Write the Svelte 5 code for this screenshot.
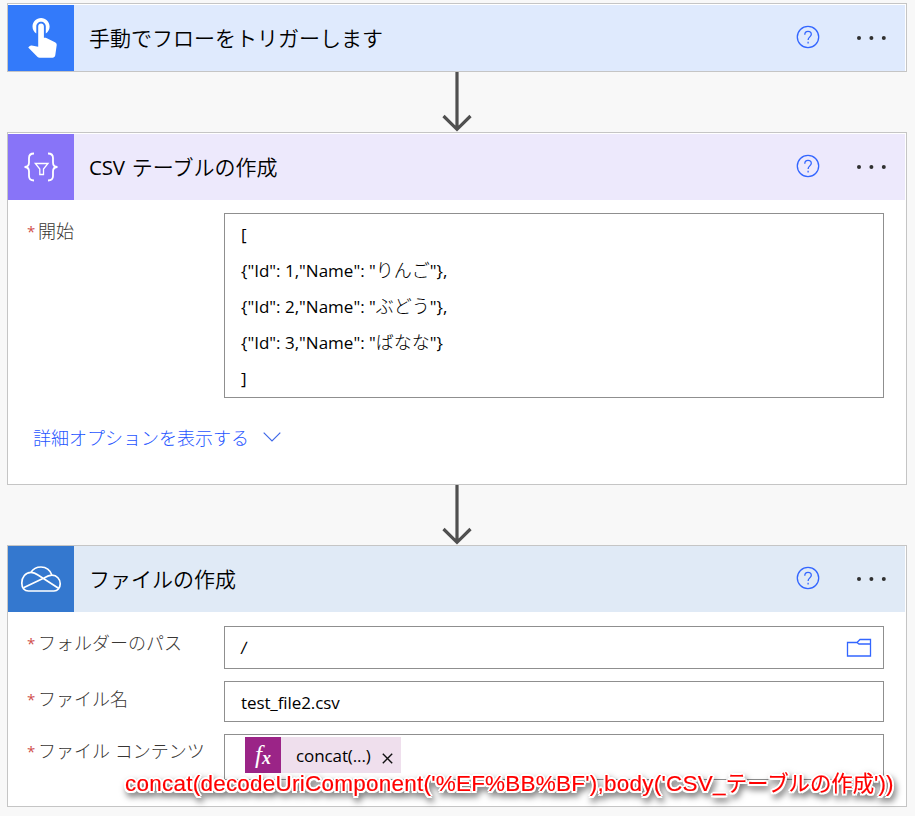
<script>
  const rows = [
    ['[', '', ''],
    ['{"Id": 1,"Name": "', 'りんご', '"},'],
    ['{"Id": 2,"Name": "', 'ぶどう', '"},'],
    ['{"Id": 3,"Name": "', 'ばなな', '"}'],
    [']', '', '']
  ];
</script>

{#snippet actions()}
  <svg class="help" viewBox="0 0 24 24"><circle cx="12" cy="12" r="10.7" /><path d="M8.8 9.7C8.8 7.5 10 6.3 12 6.3S15.3 7.5 15.3 9.3C15.3 11.8 12.1 12 12.1 15M12.1 16.8V18.4" /></svg>
  <svg class="dots" viewBox="0 0 32 6"><circle cx="3" cy="3" r="2" /><circle cx="15.4" cy="3" r="2" /><circle cx="27.8" cy="3" r="2" /></svg>
{/snippet}

{#snippet arrow()}
  <div class="connector">
    <svg width="32" height="61" viewBox="0 0 32 61"><path d="M16 0V57M2.5 44L16 57.3L29.5 44" /></svg>
  </div>
{/snippet}

<main>
  <section class="card trigger">
    <header>
      <svg class="tile" viewBox="0 0 66 66">
        <path fill="#fff" transform="translate(11.2 7.2) scale(1.9)" d="M9 11.24V7.5C9 6.12 10.12 5 11.5 5S14 6.12 14 7.5v3.74c1.21-.81 2-2.18 2-3.74C16 5.01 13.99 3 11.5 3S7 5.01 7 7.5c0 1.56.79 2.93 2 3.74zm9.84 4.63l-4.54-2.26c-.17-.07-.35-.11-.54-.11H13v-6c0-.83-.67-1.5-1.5-1.5S10 6.67 10 7.5v10.74l-3.43-.72c-.08-.01-.15-.03-.24-.03-.31 0-.59.13-.79.33l-.79.8 4.94 4.94c.27.27.65.44 1.06.44h6.79c.75 0 1.33-.55 1.44-1.28l.75-5.27c.01-.07.02-.14.02-.2 0-.62-.38-1.16-.91-1.38z" />
      </svg>
      <h2>手動でフローをトリガーします</h2>
      {@render actions()}
    </header>
  </section>

  {@render arrow()}

  <section class="card table">
    <header>
      <svg class="tile" viewBox="0 0 66 66">
        <g fill="none" stroke="#fff">
          <path stroke-width="1.8" d="M26 19.5C22.5 19.5 21 21 21 24V28.5C21 31.5 20 33 16.5 33C20 33 21 34.5 21 37.5V42C21 45 22.5 46.5 26 46.5M40 19.5C43.5 19.5 45 21 45 24V28.5C45 31.5 46 33 49.5 33C46 33 45 34.5 45 37.5V42C45 45 43.5 46.5 40 46.5" />
          <path stroke-width="1.3" d="M27.3 29.5H40L35.5 35V40.5H31.8V35Z" />
        </g>
      </svg>
      <h2><span class="latin">CSV</span>テーブルの作成</h2>
      {@render actions()}
    </header>
    <div class="field">
      <span class="label"><i>*</i>開始</span>
      <div class="input area">
        {#each rows as [head, kana, tail]}<div class="line">{head}<span>{kana}</span>{tail}</div>{/each}
      </div>
    </div>
    <a class="more" href="#more">詳細オプションを表示する<svg width="18" height="10" viewBox="0 0 18 10"><path d="M.7 .7L9 9L17.3 .7" /></svg></a>
  </section>

  {@render arrow()}

  <section class="card file">
    <header>
      <svg class="tile" viewBox="0 0 66 66">
        <g fill="none" stroke="#fff" stroke-width="1.7" stroke-linejoin="round">
          <path d="M20.5 45C16.5 45 13.8 42 13.8 37C13.8 31 17.5 26.5 23 26.3C25 23 28.5 21 33 21C38.2 21 42.2 24.3 44 29.2C48.8 29.3 52.2 33 52.2 37.7C52.2 42 49.5 45 46 45Z" />
          <path d="M23 26.3C26 26.3 28 27.5 30 29L50.5 42.3M15.5 41.7L36 32C38.5 30.5 41 29.2 44 29.2" />
        </g>
      </svg>
      <h2>ファイルの作成</h2>
      {@render actions()}
    </header>
    <div class="field path">
      <span class="label"><i>*</i>フォルダーのパス</span>
      <div class="input"><span class="slash">/</span>
        <svg class="folder" width="26" height="20" viewBox="0 0 26 20"><path d="M1.5 4.5H11L14 1.5H24.5V18H1.5ZM11 4.5L13 6H24.5" /></svg>
      </div>
    </div>
    <div class="field name">
      <span class="label"><i>*</i>ファイル名</span>
      <div class="input"><span class="filename">test_file2.csv</span></div>
    </div>
    <div class="field content">
      <span class="label"><i>*</i>ファイル コンテンツ</span>
      <div class="input">
        <span class="token"><b><em>f</em><em class="x">x</em></b><span>concat(...)</span><svg width="11" height="11" viewBox="0 0 11 11"><path d="M.8 .8L10.2 10.2M10.2 .8L.8 10.2" /></svg></span>
      </div>
    </div>
    <div class="note"><span class="expr">concat(decodeUriComponent('%EF%BB%BF'),body('CSV_</span><span class="kana">テーブルの作成</span><span>'))</span></div>
  </section>
</main>

<style>
  :global(body) { background: #fff; }
  main {
    box-sizing: border-box;
    height: 816px;
    padding: 3px 8px 0 7px;
    background: #f8f8f8;
    font-family: "Open Sans", "Noto Sans CJK JP", sans-serif;
    color: #000;
  }
  .card {
    position: relative;
    box-sizing: border-box;
    width: 900px;
    border: 1px solid #c5c5c5;
    background: #fff;
    padding: 1px 1px 0 0;
  }
  .trigger { height: 69px; }
  .table { height: 353px; }
  .file { height: 262px; padding-top: 0; }
  header {
    display: flex;
    align-items: center;
    height: 66px;
    background: var(--tint);
  }
  .trigger { --tint: #dfeafd; --main: #337afa; }
  .table { --tint: #ede9fc; --main: #8874f8; }
  .file { --tint: #e0eaf6; --main: #3478cf; }
  .tile { width: 66px; height: 66px; background: var(--main); }
  h2 {
    flex: 1;
    margin: -2px 0 0 15px;
    font: 350 21px/30px "Noto Sans CJK JP", sans-serif;
    white-space: pre;
  }
  .latin { margin-right: 7px; font-family: "Open Sans", sans-serif; font-weight: 400; font-size: 20.5px; letter-spacing: -0.2px; }
  .help { width: 24px; height: 24px; margin-right: 36px; margin-top: -2px; fill: none; stroke: #3366ff; stroke-width: 1.3; }
  .dots { width: 32px; height: 6px; margin-right: 17px; margin-top: -1px; fill: #303030; }
  .connector { display: flex; padding-left: 434px; height: 60px; }
  .connector path { fill: none; stroke: #505050; stroke-width: 3.2; }
  .field { display: flex; justify-content: space-between; padding: 0 21px 0 20px; }
  .table .field { padding-top: 13px; }
  .label {
    display: flex;
    height: 36px;
    font: 300 18px/36px "Open Sans", "Noto Sans CJK JP", sans-serif;
    color: #383634;
    white-space: pre;
  }
  .label i { width: 10px; margin-left: -1px; margin-right: 1px; font-style: normal; font-size: 15px; font-weight: 400; color: #d0504c; }
  .input {
    box-sizing: border-box;
    display: flex;
    align-items: center;
    width: 660px;
    border: 1px solid #8f8f8f;
    background: #fff;
    padding-left: 16px;
    font-size: 17px;
    font-weight: 400;
  }
  .slash { transform: skewX(-6deg); }
  .filename { letter-spacing: -0.1px; margin-top: 1px; }
  .area { display: block; height: 185px; padding-top: 3px; }
  .line { height: 36px; line-height: 36px; white-space: pre; }
  .line span { font: 300 18px/30px "Noto Sans CJK JP", sans-serif; }
  .more {
    display: flex;
    align-items: center;
    width: max-content;
    margin: 21px 0 0 25px;
    font: 300 18px/36px "Noto Sans CJK JP", sans-serif;
    color: #1f55ff;
    text-decoration: none;
  }
  .more svg { margin-left: 14px; fill: none; stroke: #3f68e8; stroke-width: 1.2; }
  .path { margin-top: 14px; height: 43px; }
  .path .input { justify-content: space-between; padding-right: 11px; }
  .path .label { margin-top: -1px; }
  .folder { fill: none; stroke: #3366ff; stroke-width: 1.3; }
  .name { margin-top: 12px; height: 41px; }
  .content { margin-top: 12px; height: 46px; }
  .content .label { margin-top: -1px; }
  .content .input { align-items: flex-start; padding: 2px 0 0 20px; }
  .token { display: flex; align-items: center; width: 156px; height: 36px; background: #efdfed; font-size: 17px; letter-spacing: -0.1px; }
  .token b { display: flex; align-items: center; justify-content: center; width: 36px; height: 36px; margin-right: 15px; background: #9b2487; color: #fff; font: italic 25px/36px "Liberation Serif", serif; }
  .token b .x { font-size: 18px; font-weight: 700; padding-top: 6px; }
  .token svg { margin: 6px 0 0 11px; fill: none; stroke: #111; stroke-width: 1.4; }
  .note {
    position: absolute;
    left: 117px;
    top: 221px;
    display: flex;
    white-space: pre;
    font: 22.5px/34px "Liberation Sans", "Noto Sans CJK JP", sans-serif;
    color: #f00;
    -webkit-text-stroke: 0.15px #f00;
    text-shadow: 2px 0 #fff, -2px 0 #fff, 0 2px #fff, 0 -2px #fff, 1.5px 1.5px #fff, -1.5px 1.5px #fff, 1.5px -1.5px #fff, -1.5px -1.5px #fff;
    filter: drop-shadow(2px 4px 3px rgba(0, 0, 0, 0.5));
  }
  .expr { letter-spacing: 0.23px; }
  .kana { font-size: 21.4px; }
</style>
